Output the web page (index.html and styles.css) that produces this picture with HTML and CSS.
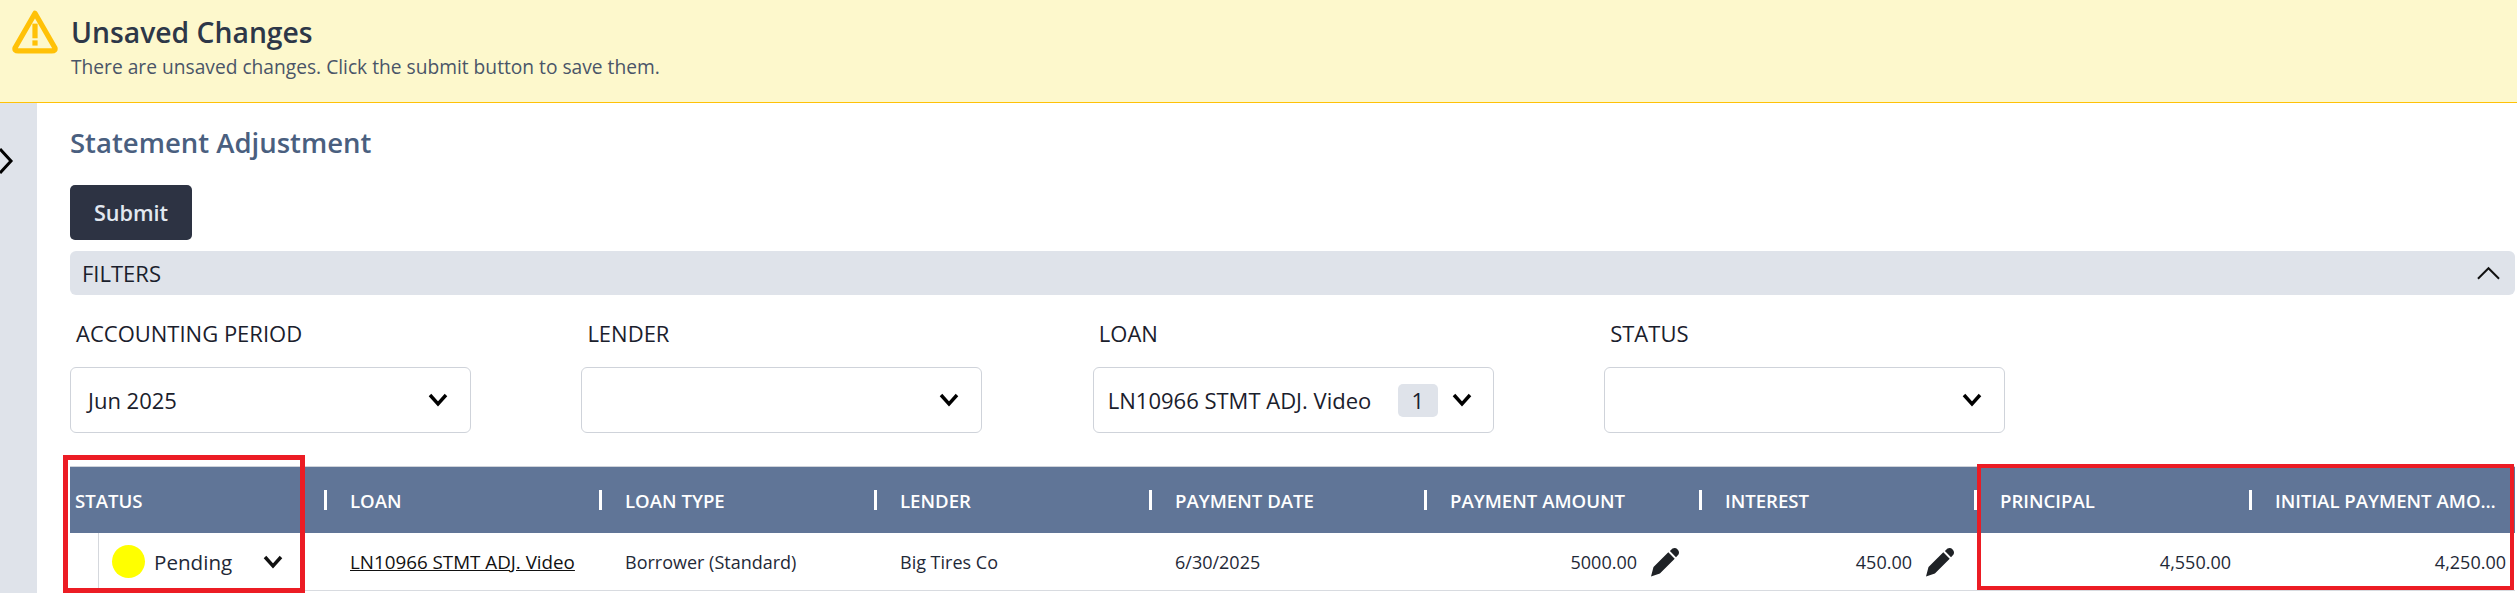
FILE: index.html
```html
<!DOCTYPE html>
<html lang="en">
<head>
<meta charset="utf-8">
<title>Statement Adjustment</title>
<link rel="stylesheet" href="styles.css">
</head>
<body>
<div class="banner">
  <svg class="warn" viewBox="0 0 44 42"><path d="M22 3 L41 36 Q42 39 38 39 H6 Q2 39 3 36 Z" fill="none" stroke="#ffc107" stroke-width="5" stroke-linejoin="round"/><rect x="19.5" y="13" width="5" height="14" fill="#ffc107"/><rect x="19.5" y="29" width="5" height="5" fill="#ffc107"/></svg>
  <div class="banner-text">
    <div class="banner-title">Unsaved Changes</div>
    <div class="banner-sub">There are unsaved changes. Click the submit button to save them.</div>
  </div>
</div>
<div class="main">
  <aside class="side"><svg class="side-arrow" viewBox="0 0 14 28"><path d="M0 2 L11 14 L0 26" fill="none" stroke="#000" stroke-width="3"/></svg></aside>
  <section class="content">
    <h1 class="title">Statement Adjustment</h1>
    <button class="submit">Submit</button>
    <div class="filters-bar"><span>FILTERS</span><svg class="up" viewBox="0 0 24 14"><path d="M1 13 L12 2 L23 13" fill="none" stroke="#111" stroke-width="2"/></svg></div>
    <div class="filters">
      <div class="filter"><label>ACCOUNTING PERIOD</label><div class="select"><span class="val">Jun 2025</span><svg class="chev" viewBox="0 0 20 14"><path d="M2 2 L10 11 L18 2" fill="none" stroke="#000" stroke-width="3.4"/></svg></div></div>
      <div class="filter"><label>LENDER</label><div class="select"><span class="val"></span><svg class="chev" viewBox="0 0 20 14"><path d="M2 2 L10 11 L18 2" fill="none" stroke="#000" stroke-width="3.4"/></svg></div></div>
      <div class="filter"><label>LOAN</label><div class="select loan"><span class="val">LN10966 STMT ADJ. Video</span><span class="count">1</span><svg class="chev" viewBox="0 0 20 14"><path d="M2 2 L10 11 L18 2" fill="none" stroke="#000" stroke-width="3.4"/></svg></div></div>
      <div class="filter"><label>STATUS</label><div class="select"><span class="val"></span><svg class="chev" viewBox="0 0 20 14"><path d="M2 2 L10 11 L18 2" fill="none" stroke="#000" stroke-width="3.4"/></svg></div></div>
    </div>
    <div class="table">
      <div class="thead">
        <div class="th first">STATUS</div>
        <div class="th">LOAN</div>
        <div class="th">LOAN TYPE</div>
        <div class="th">LENDER</div>
        <div class="th">PAYMENT DATE</div>
        <div class="th">PAYMENT AMOUNT</div>
        <div class="th">INTEREST</div>
        <div class="th">PRINCIPAL</div>
        <div class="th last">INITIAL PAYMENT AMOUNT</div>
      </div>
      <div class="trow">
        <div class="td status-cell"><div class="status-inner"><span class="dot"></span><span class="pending">Pending</span><svg class="chev" viewBox="0 0 20 14"><path d="M2 2 L10 11 L18 2" fill="none" stroke="#111" stroke-width="3.4"/></svg></div></div>
        <div class="td"><a class="link" href="#">LN10966 STMT ADJ. Video</a></div>
        <div class="td">Borrower (Standard)</div>
        <div class="td">Big Tires Co</div>
        <div class="td">6/30/2025</div>
        <div class="td num edit">5000.00<svg class="pen" viewBox="0 0 30 30"><path d="M1 29.5 L3.5 20.1 L18.3 5.3 L24.7 11.7 L9.9 26.5 Z M19.9 4.1 L22.5 1.5 A4.5 4.5 0 0 1 28.5 7.5 L26 10.2 Z"/></svg></div>
        <div class="td num edit">450.00<svg class="pen" viewBox="0 0 30 30"><path d="M1 29.5 L3.5 20.1 L18.3 5.3 L24.7 11.7 L9.9 26.5 Z M19.9 4.1 L22.5 1.5 A4.5 4.5 0 0 1 28.5 7.5 L26 10.2 Z"/></svg></div>
        <div class="td num">4,550.00</div>
        <div class="td num last">4,250.00</div>
      </div>
    </div>
  </section>
</div>
<div class="mark mark-left"></div>
<div class="mark mark-right"></div>
</body>
</html>
```
FILE: styles.css
```css
* { box-sizing: border-box; }
html, body { margin: 0; height: 593px; overflow: hidden; }
body { position: relative; font-family: "Open Sans", "Noto Sans", sans-serif; background: #fff; color: #1a202c; }
.banner { height: 103px; background: #fdf8cc; border-bottom: 1px solid #ffc107; display: flex; align-items: flex-start; padding: 10px 0 0 12px; gap: 13px; }
.warn { width: 46px; height: 44px; flex: none; }
.banner-text { padding-top: 4px; }
.banner-title { font-size: 28.3px; font-weight: 600; line-height: 36px; color: #2d3748; }
.banner-sub { font-size: 19.2px; line-height: 34px; color: #4a5568; }
.main { display: flex; height: 490px; }
.side { width: 37px; flex: none; background: #dfe3ea; padding-top: 44px; }
.side-arrow { display: block; width: 14px; height: 28px; }
.content { flex: 1; min-width: 0; padding: 24px 2px 0 33px; }
.title { margin: 0; font-size: 27.5px; font-weight: 600; line-height: 32px; color: #4a5f7f; }
.submit { display: block; margin-top: 26px; width: 122px; height: 55px; background: #2d3343; color: #e2e8f0; border: 0; border-radius: 5px; font: 600 21.6px "Open Sans", sans-serif; }
.filters-bar { margin-top: 11px; height: 44px; background: #dfe3ea; border-radius: 6px; display: flex; align-items: center; justify-content: space-between; padding: 0 15px 0 12px; font-size: 22px; color: #1a202c; }
.up { width: 23px; height: 14px; }
.filters { display: grid; grid-template-columns: repeat(4, 401px); column-gap: 110.4px; margin-top: 24px; }
.filter label { display: block; font-size: 22px; line-height: 28px; padding-left: 6px; color: #1a202c; }
.select { margin-top: 20px; height: 66px; border: 1px solid #cfd3da; border-radius: 6px; display: flex; align-items: center; padding: 0 22px 0 17px; font-size: 22px; }
.select .val { flex: 1; }
.select.loan { padding: 0 21px 0 14px; }
.count { width: 40px; height: 33px; background: #dfe3ea; border-radius: 5px; display: flex; align-items: center; justify-content: center; margin-right: 14px; }
.chev { width: 20px; height: 14px; flex: none; }
.table { margin-top: 33px; border-top: 1px solid #cfd3da; border-bottom: 1px solid #d8dbe0; width: 2445px; }
.thead, .trow { display: grid; grid-template-columns: 257px repeat(7, 275px) 263px; }
.thead { height: 66px; background: #607597; color: #fff; font-size: 18.6px; font-weight: 600; }
.th { position: relative; height: 66px; padding: 0 3px 0 23px; line-height: 68px; }
.th::after { content: ""; position: absolute; right: 0; top: 23px; width: 3px; height: 20px; background: #fff; }
.th.first { padding-left: 5px; }
.th.last { width: 250px; padding-right: 0; white-space: nowrap; overflow: hidden; text-overflow: ellipsis; }
.th.last::after { display: none; }
.trow { height: 57px; font-size: 18px; align-items: center; }
.td { padding-left: 23px; white-space: nowrap; color: #1f2937; }
.num { text-align: right; padding: 0 21px 0 0; }
.num.edit { display: flex; justify-content: flex-end; align-items: center; gap: 13px; padding-right: 22px; }
.num.last { width: 254px; padding-right: 0; }
.pen { width: 30px; height: 30px; fill: #1f2226; }
.link { color: #111; font-size: 18.8px; }
.status-cell { padding: 0 0 0 28px; height: 57px; }
.status-inner { border-left: 1px solid #d5d8dd; height: 57px; display: flex; align-items: center; padding-left: 13px; }
.dot { width: 33px; height: 33px; border-radius: 50%; background: #ffff00; flex: none; }
.pending { font-size: 20.6px; margin-left: 9px; width: 109px; }
.mark { position: absolute; border: 5px solid #ec1c24; pointer-events: none; }
.mark-left { left: 63px; top: 455px; width: 242px; height: 138px; }
.mark-right { left: 1977px; top: 464px; width: 537px; height: 126px; border-width: 4px; }
```
